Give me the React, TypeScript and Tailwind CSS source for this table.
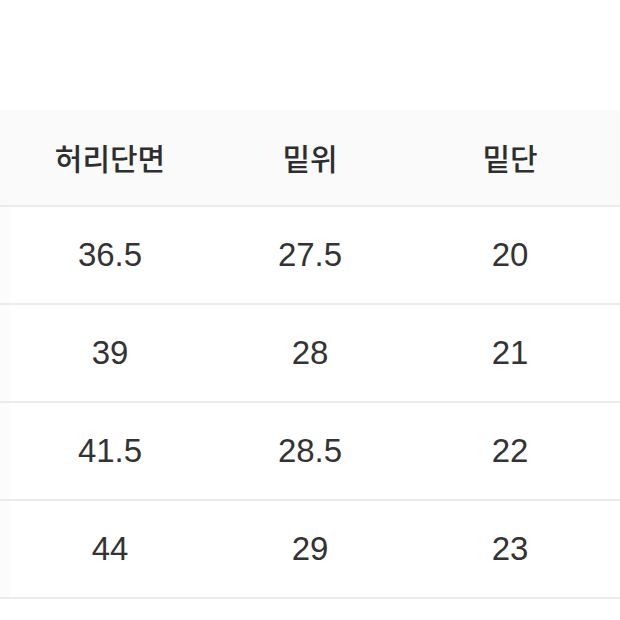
export default function App() {
  const rows = [
    ["36.5", "27.5", "20"],
    ["39", "28", "21"],
    ["41.5", "28.5", "22"],
    ["44", "29", "23"],
  ];
  return (
    <div className="w-[620px] h-[620px] bg-white overflow-hidden pt-[110px]" style={{ fontFamily: '"Liberation Sans", "Noto Sans CJK KR", sans-serif' }}>
      <div className="flex h-[97px] bg-[#fafafa] border-b-2 border-[#ebebeb]">
        <div className="w-[10px] shrink-0" />
        {["허리단면", "밑위", "밑단"].map((h) => (
          <div key={h} className="w-[200px] shrink-0 flex items-center justify-center text-[30px] text-[#2e2e2e] font-medium" style={{ fontFamily: '"Noto Sans CJK KR", sans-serif' }}>
            {h}
          </div>
        ))}
      </div>
      {rows.map((r, i) => (
        <div key={i} className="flex h-[98px] border-b-2 border-[#ebebeb]">
          <div className="w-[10px] shrink-0 bg-[#fcfcfc]" />
          {r.map((c, j) => (
            <div key={j} className="w-[200px] shrink-0 flex items-center justify-center text-[33px] text-[#333333]">
              {c}
            </div>
          ))}
        </div>
      ))}
    </div>
  );
}
